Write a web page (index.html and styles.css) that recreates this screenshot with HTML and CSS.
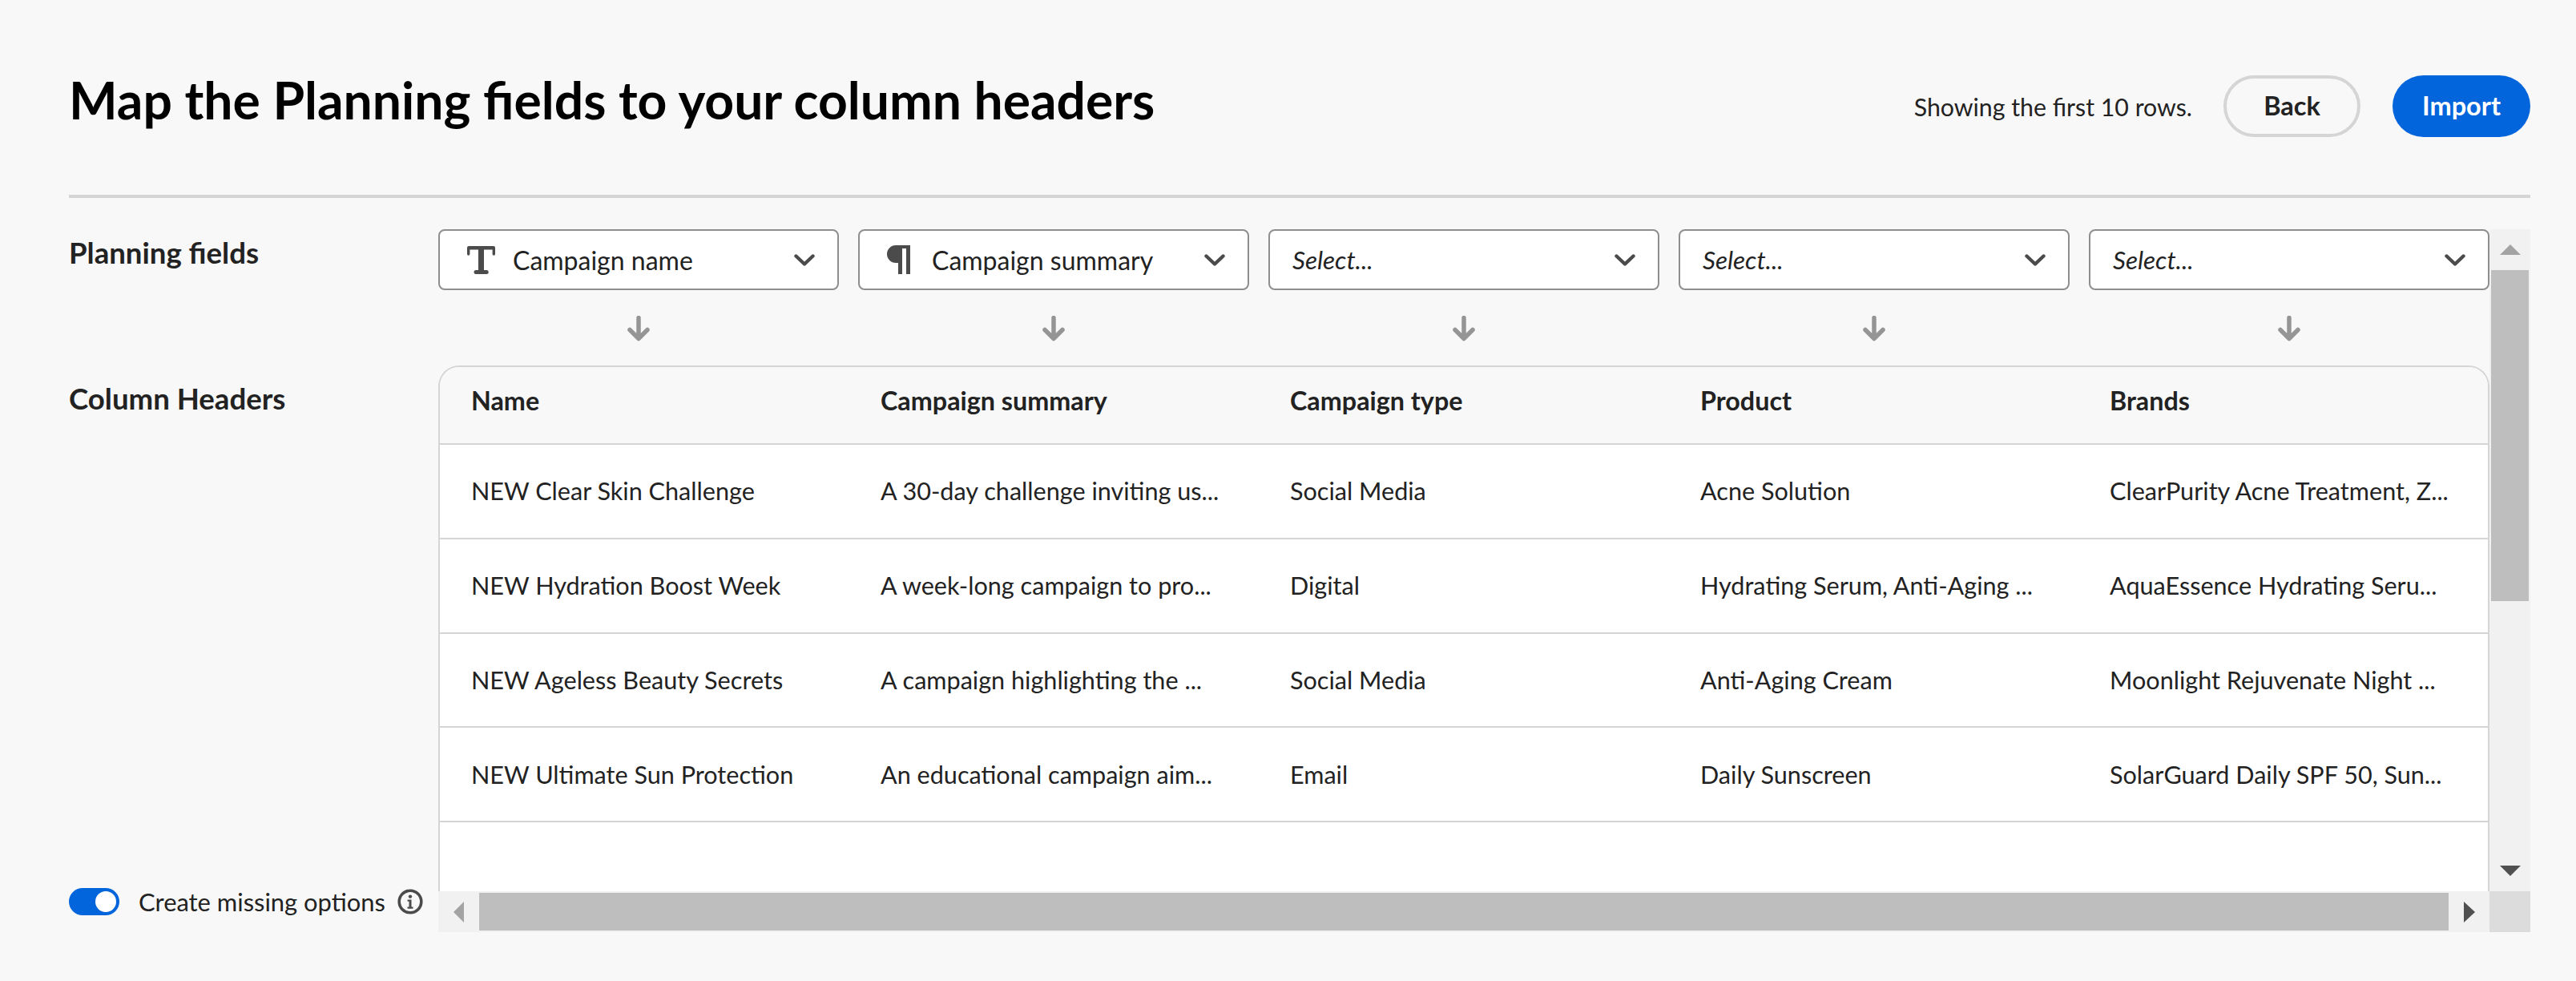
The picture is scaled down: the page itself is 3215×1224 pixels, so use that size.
FILE: index.html
```html
<!DOCTYPE html>
<html lang="en">
<head>
<meta charset="UTF-8">
<title>Map the Planning fields</title>
<link rel="stylesheet" href="styles.css">
</head>
<body>
<div class="page">
  <header class="top">
    <h1 class="title">Map the Planning fields to your column headers</h1>
    <div class="actions">
      <span class="note">Showing the first 10 rows.</span>
      <button class="btn btn-back">Back</button>
      <button class="btn btn-import">Import</button>
    </div>
  </header>

  <main class="map">
    <div class="labels">
      <div class="label label-fields">Planning fields</div>
      <div class="label label-headers">Column Headers</div>
      <div class="missing">
        <span class="switch"><span class="knob"></span></span>
        <span class="missing-text">Create missing options</span>
        <svg class="info" viewBox="0 0 32 32"><circle cx="16" cy="16" r="13.8" fill="none" stroke="currentColor" stroke-width="3.6"/><circle cx="16" cy="9.6" r="2.2" fill="currentColor"/><path d="M12.6 13.6h4.9v9h2v2.2h-7v-2.2h2v-6.8h-1.9z" fill="currentColor"/></svg>
      </div>
    </div>

    <div class="sheet">
      <div class="view">
        <div class="fields">
          <div class="select">
            <svg class="type type-t" viewBox="0 0 35 35"><path d="M2 0h31a2 2 0 0 1 2 2v8a1.7 1.7 0 0 1-3.4 0V4.600H21V30h3.200a2.500 2.500 0 0 1 0 5H11a2.500 2.500 0 0 1 0-5h3V4.600H3.400V10A1.700 1.700 0 0 1 0 10V2a2 2 0 0 1 2-2z" fill="currentColor"/></svg>
            <span class="select-text">Campaign name</span>
            <svg class="chev" viewBox="0 0 26 15"><path d="M2.500 2.500 13 12.500 23.500 2.500" fill="none" stroke="currentColor" stroke-width="4.400" stroke-linecap="round" stroke-linejoin="round"/></svg>
          </div>
          <div class="select">
            <svg class="type type-p" viewBox="0 0 29 36"><path d="M11 0H29V36H24V4H19V36H14V22H11A11 11 0 0 1 11 0z" fill="currentColor"/></svg>
            <span class="select-text">Campaign summary</span>
            <svg class="chev" viewBox="0 0 26 15"><path d="M2.500 2.500 13 12.500 23.500 2.500" fill="none" stroke="currentColor" stroke-width="4.400" stroke-linecap="round" stroke-linejoin="round"/></svg>
          </div>
          <div class="select">
            <span class="select-text placeholder">Select...</span>
            <svg class="chev" viewBox="0 0 26 15"><path d="M2.500 2.500 13 12.500 23.500 2.500" fill="none" stroke="currentColor" stroke-width="4.400" stroke-linecap="round" stroke-linejoin="round"/></svg>
          </div>
          <div class="select">
            <span class="select-text placeholder">Select...</span>
            <svg class="chev" viewBox="0 0 26 15"><path d="M2.500 2.500 13 12.500 23.500 2.500" fill="none" stroke="currentColor" stroke-width="4.400" stroke-linecap="round" stroke-linejoin="round"/></svg>
          </div>
          <div class="select">
            <span class="select-text placeholder">Select...</span>
            <svg class="chev" viewBox="0 0 26 15"><path d="M2.500 2.500 13 12.500 23.500 2.500" fill="none" stroke="currentColor" stroke-width="4.400" stroke-linecap="round" stroke-linejoin="round"/></svg>
          </div>
          <svg class="down" viewBox="0 0 28 32"><path d="M14 2.500V28M3 17.500 14 28.500 25 17.500" fill="none" stroke="currentColor" stroke-width="5.500" stroke-linecap="round" stroke-linejoin="round"/></svg>
          <svg class="down" viewBox="0 0 28 32"><path d="M14 2.500V28M3 17.500 14 28.500 25 17.500" fill="none" stroke="currentColor" stroke-width="5.500" stroke-linecap="round" stroke-linejoin="round"/></svg>
          <svg class="down" viewBox="0 0 28 32"><path d="M14 2.500V28M3 17.500 14 28.500 25 17.500" fill="none" stroke="currentColor" stroke-width="5.500" stroke-linecap="round" stroke-linejoin="round"/></svg>
          <svg class="down" viewBox="0 0 28 32"><path d="M14 2.500V28M3 17.500 14 28.500 25 17.500" fill="none" stroke="currentColor" stroke-width="5.500" stroke-linecap="round" stroke-linejoin="round"/></svg>
          <svg class="down" viewBox="0 0 28 32"><path d="M14 2.500V28M3 17.500 14 28.500 25 17.500" fill="none" stroke="currentColor" stroke-width="5.500" stroke-linecap="round" stroke-linejoin="round"/></svg>
        </div>

        <div class="tablebox">
          <table class="grid">
            <colgroup>
              <col class="col-a"><col class="col-a"><col class="col-b"><col class="col-d"><col class="col-c">
            </colgroup>
            <thead>
              <tr><th>Name</th><th>Campaign summary</th><th>Campaign type</th><th>Product</th><th>Brands</th></tr>
            </thead>
            <tbody>
              <tr><td>NEW Clear Skin Challenge</td><td>A 30-day challenge inviting us...</td><td>Social Media</td><td>Acne Solution</td><td>ClearPurity Acne Treatment, Z...</td></tr>
              <tr><td>NEW Hydration Boost Week</td><td>A week-long campaign to pro...</td><td>Digital</td><td>Hydrating Serum, Anti-Aging ...</td><td>AquaEssence Hydrating Seru...</td></tr>
              <tr><td>NEW Ageless Beauty Secrets</td><td>A campaign highlighting the ...</td><td>Social Media</td><td>Anti-Aging Cream</td><td>Moonlight Rejuvenate Night ...</td></tr>
              <tr><td>NEW Ultimate Sun Protection</td><td>An educational campaign aim...</td><td>Email</td><td>Daily Sunscreen</td><td>SolarGuard Daily SPF 50, Sun...</td></tr>
            </tbody>
          </table>
        </div>
      </div>

      <div class="vbar">
        <div class="sb-btn"><span class="tri tri-up"></span></div>
        <div class="vthumb"></div>
        <div class="sb-btn sb-end"><span class="tri tri-down"></span></div>
      </div>
      <div class="hbar">
        <div class="sb-btn"><span class="tri tri-left"></span></div>
        <div class="hthumb"></div>
        <div class="sb-btn"><span class="tri tri-right"></span></div>
      </div>
      <div class="corner"></div>
    </div>
  </main>
</div>
</body>
</html>
```

FILE: styles.css
```css
* {box-sizing: border-box;}
html, body {margin: 0; padding: 0;}
body {background: #f8f8f8; color: #222; font-family: "Lato", "Open Sans", sans-serif; font-size: 31px;}

.page {width: 3215px; height: 1224px; padding: 0 57px 61px 86px; display: flex; flex-direction: column;}

/* top bar */
.top {height: 247px; flex: none; padding-top: 91px; border-bottom: 4px solid #d5d5d5; display: flex; justify-content: space-between; align-items: flex-start;}
.title {margin: 0; font-size: 64.2px; line-height: 68px; font-weight: 700; color: #000;}
.actions {display: flex; align-items: center; gap: 40px; margin-top: 3px;}
.note {margin-right: -1px; font-size: 30.3px;}
.btn {height: 77px; border-radius: 39px; font: 700 32.5px "Lato", sans-serif; padding: 0 0 3px;}
.btn-back {width: 171px; background: transparent; border: 4px solid #d5d5d5; color: #222;}
.btn-import {width: 172px; background: #0265dc; border: 0; color: #fff;}

/* main area */
.map {flex: 1; margin-top: 39px; display: grid; grid-template-columns: 461px 1fr; min-height: 0;}
.labels {display: flex; flex-direction: column; padding-bottom: 21px;}
.label {font-size: 36.6px; font-weight: 700; line-height: 40px;}
.label-fields {margin-top: 9px;}
.label-headers {margin-top: 142px;}
.missing {margin-top: auto; display: flex; align-items: center; height: 34px;}
.switch {width: 63px; height: 34px; border-radius: 17px; background: #0265dc; position: relative; flex: none;}
.knob {position: absolute; right: 4px; top: 4px; width: 26px; height: 26px; border-radius: 50%; background: #fff;}
.missing-text {margin-left: 24px; font-size: 30.9px;}
.info {width: 32px; height: 32px; margin-left: 15px; color: #4b4b4b;}

.sheet {display: grid; grid-template-columns: 2560px 51px; grid-template-rows: 826px 51px;}
.view {display: flex; flex-direction: column; min-height: 0;}

.fields {display: grid; grid-template-columns: 500px 488px 488px 488px 500px; column-gap: 24px; grid-template-rows: 76px 94px;}
.select {height: 76px; background: #fff; border: 2px solid #8e8e8e; border-radius: 8px; display: flex; align-items: center; padding: 0 28px 0 28px;}
.select-text {flex: 1; font-size: 32px; white-space: nowrap;}
.placeholder {font-size: 31.5px; font-style: italic;}
.type {color: #4b4b4b; flex: none; margin-left: 6px;}
.type-t {width: 35px; height: 35px; margin-right: 22px;}
.type-p {width: 29px; height: 36px; margin-right: 27px;}
.chev {width: 26px; height: 15px; color: #4b4b4b; flex: none;}
.down {width: 28px; height: 32px; color: #959595; justify-self: center; margin-top: 32px;}

/* table */
.tablebox {flex: 1; min-height: 0; overflow: hidden; background: #fff; border: 2px solid #d5d5d5; border-bottom: 0; border-radius: 26px 26px 0 0;}
.grid {width: 2556px; border-collapse: separate; border-spacing: 0; table-layout: fixed;}
.col-a {width: 511px;}
.col-b {width: 512px;}
.col-d {width: 511px;}
.col-c {width: 511px;}
.grid th {height: 97px; background: #f8f8f8; text-align: left; font-size: 32.3px; font-weight: 700; padding: 0 0 12px 39px; border-bottom: 2px solid #d5d5d5;}
.grid td {height: 117.75px; font-size: 30.6px; padding: 0 0 0 39px; border-bottom: 2px solid #d5d5d5; white-space: nowrap; overflow: hidden;}

/* scrollbars */
.vbar {background: #f1f1f1; display: flex; flex-direction: column;}
.hbar {background: #f1f1f1; display: flex;}
.corner {background: #dcdcdc;}
.sb-btn {width: 51px; height: 51px; flex: none; display: flex; align-items: center; justify-content: center;}
.sb-end {margin-top: auto;}
.vthumb {height: 413px; margin: 0 2px; background: #bebebe;}
.hthumb {flex: 1; margin: 2px 0; background: #bebebe;}
.tri {width: 0; height: 0; border-style: solid; border-color: transparent;}
.tri-up {border-width: 0 13px 13px; border-bottom-color: #a3a3a3;}
.tri-down {border-width: 13px 13px 0; border-top-color: #505050;}
.tri-left {border-width: 13px 13px 13px 0; border-right-color: #a3a3a3;}
.tri-right {border-width: 13px 0 13px 14px; border-left-color: #505050;}
```
